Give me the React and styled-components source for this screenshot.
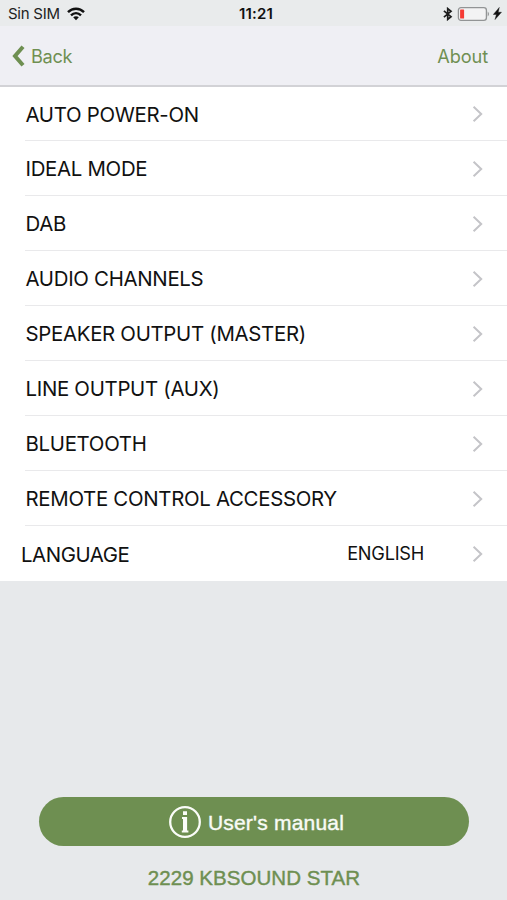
import styled, { createGlobalStyle } from "styled-components"

const GlobalStyle = createGlobalStyle`
	* {
		box-sizing: border-box;
	}
	body {
		margin: 0;
		background: #e7e9eb;
	}
`;

const Screen = styled.div`
	width: 507px;
	height: 900px;
	display: flex;
	flex-direction: column;
	overflow: hidden;
	background: #e7e9eb;
	font-family: Inter, "Liberation Sans", sans-serif;
	color: #111;
`;

const StatusBar = styled.div`
	height: 26px;
	flex: none;
	display: grid;
	grid-template-columns: 1fr auto 1fr;
	align-items: center;
	padding: 1px 5px 0 8px;
	background: #e9ebec;
	font-size: 15px;
`;
StatusBar.Side = styled.div`
	display: flex;
	align-items: center;
	justify-content: ${props => props.$end ? 'flex-end' : 'flex-start'};
	gap: ${props => props.$end ? '3px' : '7px'};
	color: #222;
	letter-spacing: -0.25px;
`;
StatusBar.Time = styled.div`
	font-weight: 600;
	letter-spacing: 0.2px;
	margin-left: 2px;
`;

const NavBar = styled.div`
	height: 61px;
	flex: none;
	display: flex;
	align-items: center;
	justify-content: space-between;
	padding: 0 19px 0 12px;
	background: #efeff4;
	border-bottom: 2px solid #d2d2d6;
`;
const NavButton = styled.button`
	display: flex;
	align-items: center;
	gap: 6px;
	padding: 0;
	border: none;
	background: none;
	color: #6f8f52;
	font-family: inherit;
	font-size: 18.2px;
	letter-spacing: ${props => props.$spacing || '0'};
	cursor: pointer;
`;

const List = styled.div`
	flex: none;
	background: #fff;
`;
const Row = styled.div`
	height: ${props => props.$first ? '54px' : '55px'};
	margin-left: ${props => props.$outdent ? '21px' : '25px'};
	padding: 1px 24px 0 ${props => props.$outdent ? '0' : '0.5px'};
	display: flex;
	align-items: center;
	border-bottom: ${props => props.$last ? 'none' : '1px solid #e9e9eb'};
	font-size: 20.4px;
	cursor: pointer;
`;
Row.Label = styled.span`
	flex: 1;
	white-space: nowrap;
	letter-spacing: ${props => props.$spacing || '-0.3px'};
`;
Row.Value = styled.span`
	margin-right: 48px;
	font-size: 18.2px;
	letter-spacing: -0.25px;
	position: relative;
	top: -1px;
`;

const Footer = styled.div`
	margin-top: auto;
	padding: 0 38px 0 39px;
	height: 103px;
	display: flex;
	flex-direction: column;
	font-family: "Liberation Sans", Arial, sans-serif;
`;
const ManualButton = styled.button`
	height: 49px;
	width: 100%;
	flex: none;
	display: flex;
	align-items: center;
	justify-content: center;
	gap: 7px;
	border: none;
	border-radius: 25px;
	padding: 0 0 0 5px;
	background: #6e8f51;
	color: #f8fbf5;
	font-family: inherit;
	font-size: 21px;
	-webkit-text-stroke: 0.4px;
	cursor: pointer;
	span {
		margin-top: 3px;
		letter-spacing: 0.2px;
	}
`;
const DeviceName = styled.div`
	margin-top: 20px;
	line-height: 24px;
	text-align: center;
	color: #6e8f51;
	font-size: 20.5px;
	letter-spacing: 0.05px;
	-webkit-text-stroke: 0.4px;
`;

const menuItems = [
	{ label: 'AUTO POWER-ON' },
	{ label: 'IDEAL MODE' },
	{ label: 'DAB' },
	{ label: 'AUDIO CHANNELS' },
	{ label: 'SPEAKER OUTPUT (MASTER)' },
	{ label: 'LINE OUTPUT (AUX)' },
	{ label: 'BLUETOOTH' },
	{ label: 'REMOTE CONTROL ACCESSORY' },
	{ label: 'LANGUAGE', value: 'ENGLISH', spacing: '-0.42px' }
];

function WifiIcon() {
	return <svg width='18' height='14' viewBox='0 0 18 14' fill='none' stroke='#111' strokeWidth='2.4'>
		<path d='M1 5.2C5.4 .6 12.6 .6 17 5.2' />
		<path d='M4 8.3C6.9 5.4 11.1 5.4 14 8.3' />
		<path d='M9 13.2L6.2 10.3C7.8 8.8 10.2 8.8 11.8 10.3Z' fill='#111' stroke='none' />
	</svg>
}
function BluetoothIcon() {
	return <svg width='10' height='14' viewBox='0 0 10 14' fill='none' stroke='#1c1c1c' strokeWidth='1.7'>
		<path d='M.9 3.8L8 9.7L4.7 12.4V1.6L8 4.3L.9 10.2' />
	</svg>
}
function BatteryIcon() {
	return <svg width='34' height='16' viewBox='0 0 34 16'>
		<rect x='2.4' y='1.6' width='28' height='12.8' rx='2.6' fill='#f3f3f4' stroke='#929495' strokeWidth='1.3' />
		<rect x='4.1' y='3.4' width='4' height='9.2' rx='.6' fill='#f53b35' />
		<path d='M31.7 5.6Q34.4 8 31.7 10.4Z' fill='#929495' />
	</svg>
}
function BoltIcon() {
	return <svg width='9' height='13' viewBox='0 0 9 13'>
		<path d='M6.3 .4L.3 7.5H3.4L2 12.6L8.5 5.2H5.2Z' fill='#111' stroke='#111' strokeWidth='.4' />
	</svg>
}
function BackIcon() {
	return <svg width='13' height='22' viewBox='0 0 13 22' fill='none'>
		<path d='M11 1.8L3 11L11 20.2' stroke='#6e8f51' strokeWidth='4' />
	</svg>
}
function Chevron() {
	return <svg width='11' height='16' viewBox='0 0 11 16' fill='none'>
		<path d='M1.6 .8L9.2 8L1.6 15.2' stroke='#c4c4c8' strokeWidth='2' />
	</svg>
}
function InfoIcon() {
	return <svg width='32' height='32' viewBox='0 0 32 32' fill='none'>
		<circle cx='16' cy='16' r='14.8' stroke='#fafcf8' strokeWidth='2.3' />
		<path d='M14 5.3H18V9.1H14ZM13 11H18.1V24.4H19.4V26.4H12.8V24.4H14V12.9H13Z' fill='#fafcf8' />
	</svg>
}

function MenuRow(props) {
	return <Row $first={props.first} $last={props.last} $outdent={props.value}>
		<Row.Label $spacing={props.spacing}>{props.label}</Row.Label>
		{props.value && <Row.Value>{props.value}</Row.Value>}
		<Chevron />
	</Row>
}

export default function App() {
	return (
		<Screen>
			<GlobalStyle />
			<StatusBar>
				<StatusBar.Side>
					<span>Sin SIM</span>
					<WifiIcon />
				</StatusBar.Side>
				<StatusBar.Time>11:21</StatusBar.Time>
				<StatusBar.Side $end>
					<BluetoothIcon />
					<BatteryIcon />
					<BoltIcon />
				</StatusBar.Side>
			</StatusBar>
			<NavBar>
				<NavButton $spacing='-0.3px'><BackIcon />Back</NavButton>
				<NavButton $spacing='-0.1px'>About</NavButton>
			</NavBar>
			<List>
				{menuItems.map((item, index) =>
					<MenuRow key={item.label} {...item} first={index === 0} last={index === menuItems.length - 1} />
				)}
			</List>
			<Footer>
				<ManualButton>
					<InfoIcon />
					<span>User's manual</span>
				</ManualButton>
				<DeviceName>2229 KBSOUND STAR</DeviceName>
			</Footer>
		</Screen>
	)
}
